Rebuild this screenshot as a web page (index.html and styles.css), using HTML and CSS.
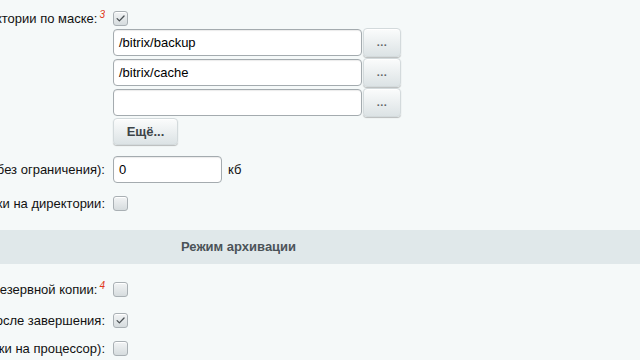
FILE: index.html
```html
<!DOCTYPE html>
<html lang="ru">
<head>
<meta charset="utf-8">
<title>Резервное копирование</title>
<link rel="stylesheet" href="styles.css">
</head>
<body>
<div class="page">
  <div class="row row-mask">
    <div class="label"><span>Исключить из архива файлы и директории по маске:<sup>3</sup></span></div>
    <div class="ctrl">
      <span class="cb checked"><svg viewBox="0 0 15 15"><path d="M3.6 7.6 L6.2 10.2 L11.6 4.6" /></svg></span>
    </div>
  </div>
  <div class="row row-input first">
    <div class="label"></div>
    <div class="ctrl"><span class="input wide">/bitrix/backup</span><span class="dots">...</span></div>
  </div>
  <div class="row row-input">
    <div class="label"></div>
    <div class="ctrl"><span class="input wide">/bitrix/cache</span><span class="dots">...</span></div>
  </div>
  <div class="row row-input">
    <div class="label"></div>
    <div class="ctrl"><span class="input wide"></span><span class="dots">...</span></div>
  </div>
  <div class="row row-more">
    <div class="label"></div>
    <div class="ctrl"><span class="btn">Ещё...</span></div>
  </div>
  <div class="row row-size">
    <div class="label"><span>Исключить из архива файлы размером более (0 - без ограничения):</span></div>
    <div class="ctrl"><span class="input short">0</span><span class="unit">кб</span></div>
  </div>
  <div class="row row-dir">
    <div class="label"><span>Архивировать символические ссылки на директории:</span></div>
    <div class="ctrl"><span class="cb"></span></div>
  </div>
  <div class="band">Режим архивации</div>
  <div class="row row-c1">
    <div class="label"><span>Проверять целостность архива после создания резервной копии:<sup>4</sup></span></div>
    <div class="ctrl"><span class="cb"></span></div>
  </div>
  <div class="row row-c2">
    <div class="label"><span>Удалять временные файлы после завершения:</span></div>
    <div class="ctrl"><span class="cb checked"><svg viewBox="0 0 15 15"><path d="M3.6 7.6 L6.2 10.2 L11.6 4.6" /></svg></span></div>
  </div>
  <div class="row row-c3">
    <div class="label"><span>Пошаговый режим (снижение нагрузки на процессор):</span></div>
    <div class="ctrl"><span class="cb"></span></div>
  </div>
</div>
</body>
</html>
```

FILE: styles.css
```css
html, body {
  margin: 0;
  padding: 0;
  background: #f5f9f9;
  overflow: hidden;
}
body {
  width: 640px;
  height: 360px;
  font-family: "Liberation Sans", Arial, sans-serif;
  font-size: 13px;
  color: #000;
}
.page {
  display: flex;
  flex-direction: column;
  padding-top: 11px;
}
.row {
  display: flex;
  align-items: center;
}
.label {
  width: 105px;
  flex: 0 0 105px;
  display: flex;
  justify-content: flex-end;
  overflow: hidden;
  white-space: nowrap;
  margin-right: 8px;
  color: #111;
  line-height: 17px;
}
.label sup {
  color: #e0371b;
  font-size: 10px;
  font-style: italic;
  vertical-align: 5px;
  line-height: 0;
  margin-left: 2px;
}
.ctrl {
  display: flex;
  align-items: center;
}
.cb {
  width: 13px;
  height: 13px;
  border: 1px solid #a9b0b4;
  border-radius: 3px;
  background: linear-gradient(#f2f4f5, #d6dcde);
  box-shadow: inset 0 1px 0 #fff;
  display: block;
}
.cb svg {
  width: 13px;
  height: 13px;
  display: block;
  margin: 0;
}
.cb svg path {
  fill: none;
  stroke: #4a5054;
  stroke-width: 1.5;
  stroke-linecap: round;
  stroke-linejoin: round;
}
.row-mask { height: 15px; }
.row-input { height: 29px; margin-top: 1px; }
.row-input.first { margin-top: 2px; }
.input {
  box-sizing: border-box;
  height: 27px;
  border: 1px solid #a4abaf;
  border-radius: 4px;
  background: #fff;
  box-shadow: inset 0 1px 1px rgba(0,0,0,0.08);
  padding: 0 5px;
  line-height: 25px;
  font-size: 13px;
  color: #000;
  display: block;
}
.input.wide { width: 249px; }
.input.short { width: 109px; }
.dots {
  box-sizing: border-box;
  width: 38px;
  height: 29px;
  margin-left: 1px;
  border-radius: 4px;
  background: linear-gradient(#fbfcfc, #dce3e5);
  box-shadow: 0 1px 1px rgba(0,0,0,0.25), inset 0 1px 0 #fff;
  border: 1px solid #d3dadc;
  color: #5f676a;
  font-size: 11px;
  font-weight: bold;
  text-align: center;
  line-height: 26px;
  letter-spacing: 0.5px;
}
.row-more { height: 27px; margin-top: 1px; }
.btn {
  box-sizing: border-box;
  width: 65px;
  height: 27px;
  border-radius: 4px;
  background: linear-gradient(#fbfcfc, #dce3e5);
  box-shadow: 0 1px 1px rgba(0,0,0,0.25), inset 0 1px 0 #fff;
  border: 1px solid #d3dadc;
  color: #3d4447;
  font-weight: bold;
  font-size: 13px;
  text-align: center;
  line-height: 25px;
}
.row-size { height: 27px; margin-top: 11px; }
.unit { margin-left: 6px; color: #111; }
.row-dir { height: 15px; margin-top: 13px; }
.band {
  margin-top: 19px;
  height: 34px;
  background: #e0e8ea;
  color: #4b5358;
  font-weight: bold;
  font-size: 13px;
  line-height: 34px;
  padding-left: 181px;
}
.row-c1 { height: 15px; margin-top: 18px; }
.row-c2 { height: 15px; margin-top: 16px; }
.row-c3 { height: 15px; margin-top: 13px; }
```
